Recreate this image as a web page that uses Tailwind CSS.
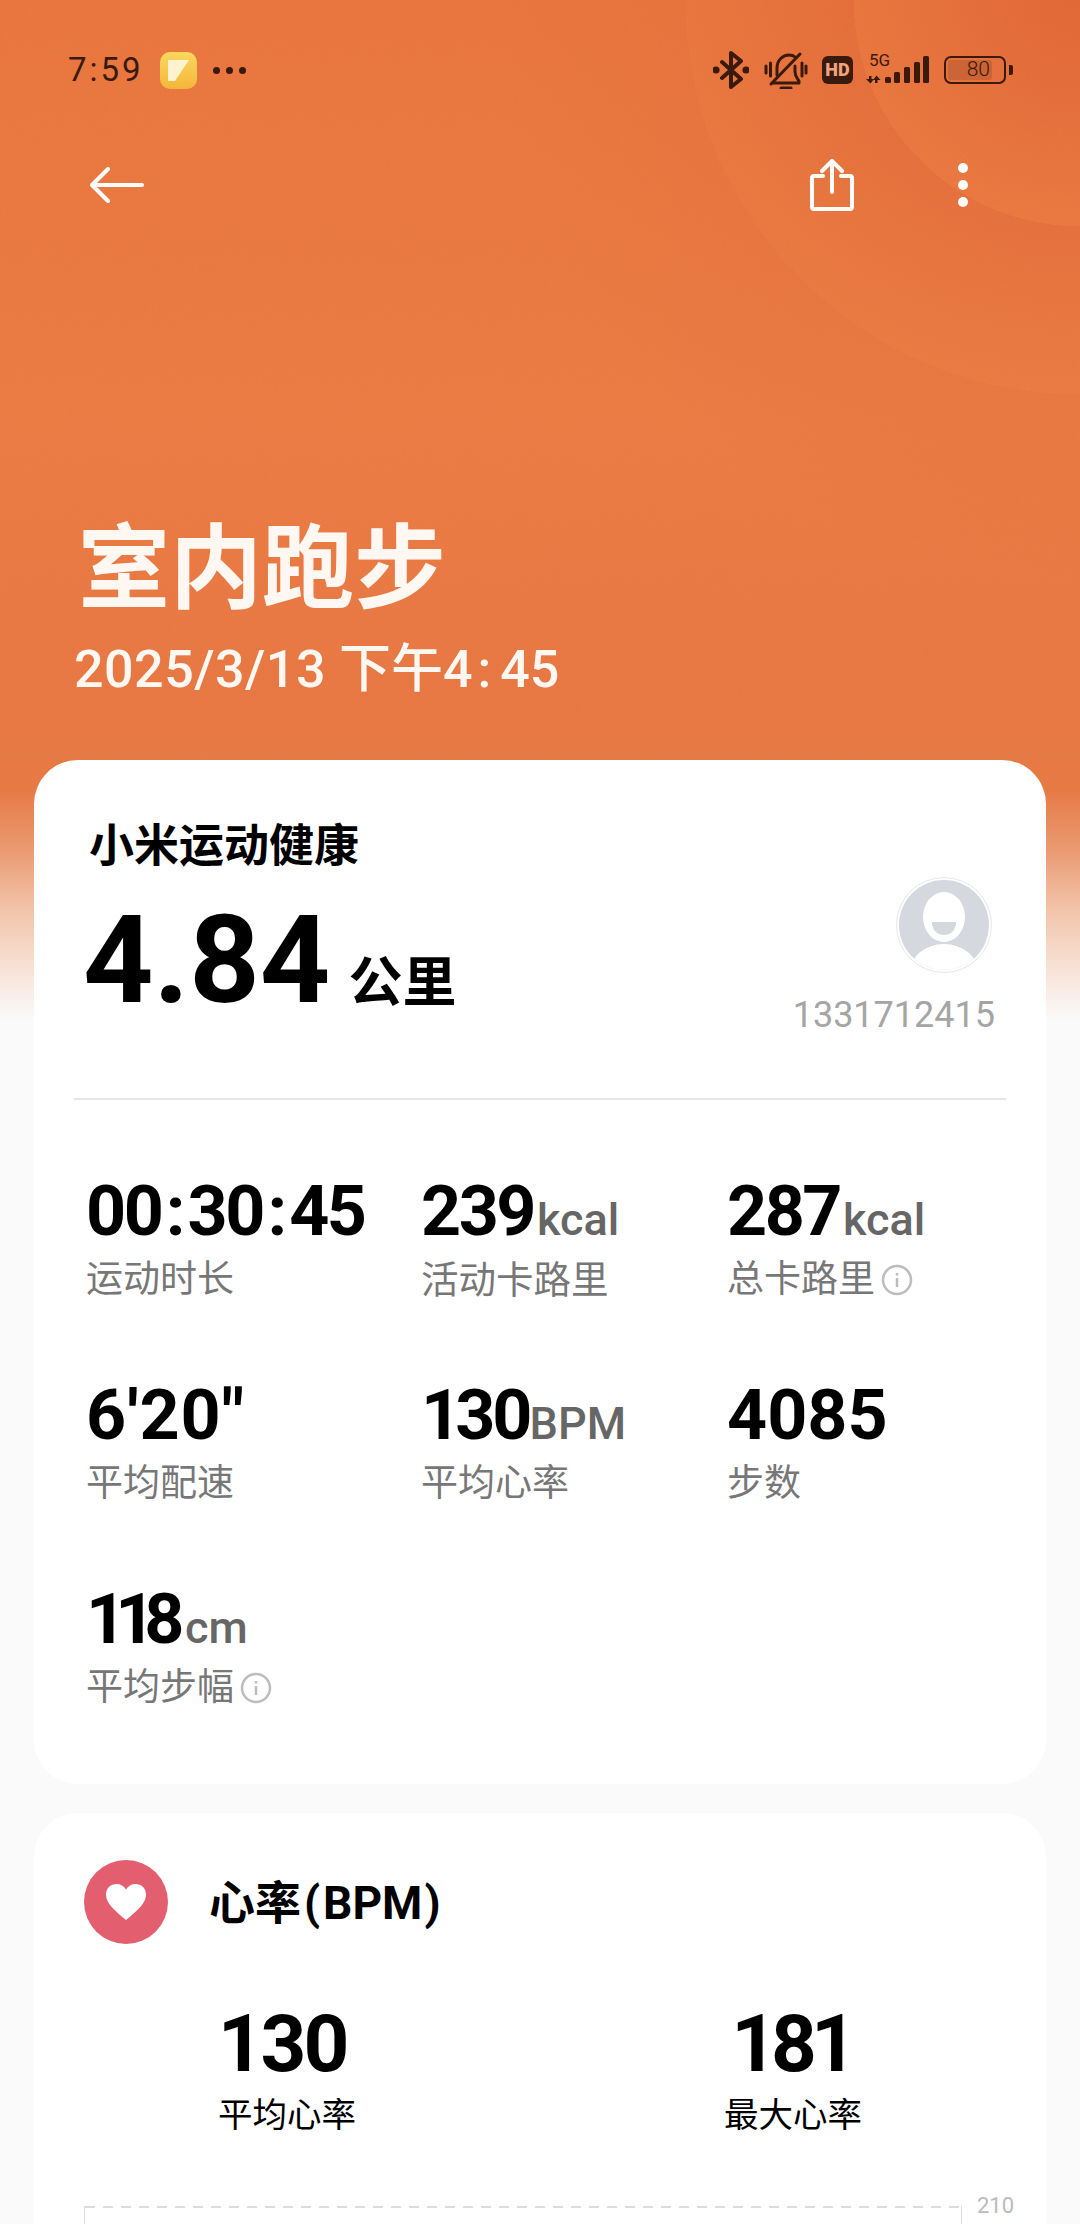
<!DOCTYPE html>
<html lang="zh-CN">
<head>
    <meta charset="UTF-8">
    <meta name="viewport" content="width=device-width, initial-scale=1.0">
    <title>室内跑步</title>
    <script src="https://cdn.jsdelivr.net/npm/@tailwindcss/browser@4"></script>
</head>
<body class="font-['Roboto','Noto_Sans_CJK_SC',sans-serif]">
<div class="relative w-[1080px] h-[2224px] overflow-hidden bg-[#fafafa]">

    <!-- orange header backdrop -->
    <div class="absolute top-0 left-0 w-full h-[1022px] bg-[linear-gradient(180deg,#ea743a_0px,#ec7a40_420px,#e97640_700px,#e67a45_790px,#ea9a72_850px,#f2c4aa_910px,#f8e5da_975px,#fafafa_1020px)]"></div>
    <svg class="absolute top-0 left-0" width="1080" height="760" viewBox="0 0 1080 760">
        <defs>
            <radialGradient id="rings" gradientUnits="userSpaceOnUse" cx="1080" cy="0" r="580">
                <stop offset="0" stop-color="#dc5c30" stop-opacity="0.6"/>
                <stop offset="0.39" stop-color="#dc5c30" stop-opacity="0"/>
                <stop offset="0.39" stop-color="#dc5c30" stop-opacity="0.3"/>
                <stop offset="0.68" stop-color="#dc5c30" stop-opacity="0"/>
                <stop offset="0.68" stop-color="#dc5c30" stop-opacity="0.12"/>
                <stop offset="1" stop-color="#dc5c30" stop-opacity="0"/>
            </radialGradient>
            <filter id="grain">
                <feTurbulence type="fractalNoise" baseFrequency="0.9" numOctaves="2"/>
                <feColorMatrix type="saturate" values="0"/>
            </filter>
        </defs>
        <circle cx="1080" cy="0" r="580" fill="url(#rings)"/>
        <rect width="1080" height="760" filter="url(#grain)" opacity="0.06"/>
    </svg>

    <div class="relative">
        <!-- status bar -->
        <div class="flex items-center justify-between h-[44px] mt-[48px] pl-[68px] pr-[67px] text-[#3a1a0d]">
            <div class="flex items-center">
                <span class="text-[33px] leading-[44px] tracking-[3px]">7:59</span>
                <div class="ml-[16px] w-[37px] h-[37px] rounded-[10px] bg-gradient-to-b from-[#fbd75e] to-[#f4b63a] flex items-center justify-center">
                    <svg width="23" height="23" viewBox="0 0 23 23"><path d="M1 1h21L8 22H1z" fill="#fdf3cf"/></svg>
                </div>
                <div class="ml-[16px] flex gap-[6px]">
                    <span class="w-[7px] h-[7px] rounded-full bg-[#3a1a0d]"></span>
                    <span class="w-[7px] h-[7px] rounded-full bg-[#3a1a0d]"></span>
                    <span class="w-[7px] h-[7px] rounded-full bg-[#3a1a0d]"></span>
                </div>
            </div>
            <div class="flex items-center">
                <!-- bluetooth -->
                <svg width="36" height="38" viewBox="0 0 36 38" fill="none" stroke="#3a1a0d" stroke-width="4" stroke-linecap="round" stroke-linejoin="round">
                    <path d="M9 11l19 17-10 8V2l10 8L9 27"/>
                    <circle cx="3" cy="19" r="1.6" fill="#3a1a0d"/>
                    <circle cx="33" cy="19" r="1.6" fill="#3a1a0d"/>
                </svg>
                <!-- muted bell -->
                <svg class="ml-[15px]" width="44" height="38" viewBox="0 0 44 38" fill="none" stroke="#3a1a0d" stroke-width="3" stroke-linecap="round" stroke-linejoin="round">
                    <path d="M13 24v-7C13 9 19 4 25 4c3 0 5 1 6 2"/>
                    <path d="M31 15v6c0 4 2 6 4 9v2H9"/>
                    <path d="M17 37h10"/>
                    <path d="M7 33L36 3"/>
                    <path d="M2 15v7M6.500 12v13M38 12v13M42 15v7"/>
                </svg>
                <!-- hd badge -->
                <div class="ml-[14px] w-[31px] h-[28px] rounded-[6px] bg-[#3a1a0d] text-[#f2a27c] text-[18px] leading-[28px] font-black text-center">HD</div>
                <!-- 5G + signal -->
                <div class="relative ml-[12px] w-[64px] h-[32px]">
                    <span class="absolute left-[4px] -top-[3px] text-[17px] leading-[18px]">5G</span>
                    <svg class="absolute left-0 top-0" width="64" height="32" viewBox="0 0 64 32" fill="#3a1a0d">
                        <path d="M4 22h2.500v3H9l-3.500 4.500L1 25h3z"/>
                        <path d="M10 29v-3H8l3.500-4.500L15.500 26h-3v3z"/>
                        <rect x="20" y="23" width="6" height="6" rx="1.500"/>
                        <rect x="29" y="18" width="6" height="11" rx="1.500"/>
                        <rect x="39" y="13" width="6" height="16" rx="1.500"/>
                        <rect x="49" y="8" width="6" height="21" rx="1.500"/>
                        <rect x="58" y="2" width="6" height="27" rx="1.500"/>
                    </svg>
                </div>
                <!-- battery -->
                <div class="ml-[15px] flex items-center">
                    <div class="w-[62px] h-[28px] rounded-[7px] border-[2.5px] border-[#3a1a0d] p-[2px]">
                        <div class="w-[44px] h-full rounded-[3px] bg-[#3a1a0d]/15 text-[21px] leading-[19px] font-light text-right pr-[2px]">80</div>
                    </div>
                    <span class="ml-[3px] w-[4px] h-[10px] rounded-r-[2px] bg-[#3a1a0d]"></span>
                </div>
            </div>
        </div>

        <!-- toolbar -->
        <div class="flex items-center justify-between h-[52px] mt-[67px] pl-[90px] pr-[112px]">
            <svg width="54" height="36" viewBox="0 0 54 36" fill="none" stroke="#fff" stroke-width="4" stroke-linecap="round" stroke-linejoin="round">
                <path d="M18 2L2 18l16 16M2 18h50"/>
            </svg>
            <div class="flex items-center gap-[104px]">
                <svg width="44" height="52" viewBox="0 0 44 52" fill="none" stroke="#fff" stroke-width="4" stroke-linecap="round" stroke-linejoin="round">
                    <path d="M13 17H4a2 2 0 0 0-2 2v29a2 2 0 0 0 2 2h36a2 2 0 0 0 2-2V19a2 2 0 0 0-2-2h-9"/>
                    <path d="M22 33V3M12 12l10-10 10 10"/>
                </svg>
                <div class="flex flex-col gap-[7px]">
                    <span class="w-[10px] h-[10px] rounded-full bg-white"></span>
                    <span class="w-[10px] h-[10px] rounded-full bg-white"></span>
                    <span class="w-[10px] h-[10px] rounded-full bg-white"></span>
                </div>
            </div>
        </div>

        <!-- title -->
        <h1 class="mt-[309px] pl-[78px] h-[100px] text-[92px] leading-[100px] font-bold text-[#fff8f2]">室内跑步</h1>
        <p class="mt-[20px] pl-[74px] h-[58px] text-[52px] leading-[60px] font-medium text-[#fff8f2]"><span class="tracking-[0.5px]">2025/3/13</span> 下午4<span class="ml-[5px] mr-[9px]">:</span>45</p>

        <!-- summary card -->
        <section class="mt-[62px] mx-[34px] h-[1024px] rounded-[44px] bg-white">
            <div class="flex justify-between h-[338px] pt-[57px] pl-[55px] pr-[51px]">
                <div>
                    <h2 class="h-[60px] text-[45px] leading-[60px] font-bold text-black">小米运动健康</h2>
                    <div class="mt-[23px] flex items-baseline">
                        <span class="-ml-[6px] text-[123px] leading-[120px] font-bold text-black">4.84</span>
                        <span class="ml-[18px] text-[54px] font-bold text-black">公里</span>
                    </div>
                </div>
                <div class="flex flex-col items-end pt-[60px]">
                    <div class="mr-[3px] w-[96px] h-[96px] rounded-full border border-[#e5e7eb] p-[2px]">
                        <svg width="90" height="90" viewBox="0 0 90 90">
                            <defs><clipPath id="avatarClip"><circle cx="45" cy="45" r="45"/></clipPath></defs>
                            <g clip-path="url(#avatarClip)">
                                <rect width="90" height="90" fill="#d5d8df"/>
                                <ellipse cx="45" cy="37" rx="21" ry="25" fill="#fff"/>
                                <path d="M33 42h24c0 9-6 13-12 13s-12-4-12-13z" fill="#d5d8df"/>
                                <ellipse cx="45" cy="92" rx="34" ry="28" fill="#fff"/>
                            </g>
                        </svg>
                    </div>
                    <span class="mt-[20px] text-[36px] leading-[44px] text-[#a5a5a5]">1331712415</span>
                </div>
            </div>
            <div class="mx-[40px] h-[2px] bg-[#e5e7eb]"></div>

            <!-- stats -->
            <div class="mt-[75px] pl-[52px] grid grid-cols-[335px_306px_1fr] gap-y-[77px]">
                <div>
                    <div class="h-[72px] text-[70px] leading-[72px] font-bold tracking-[-2.5px] text-black">00<span class="mx-[4.5px]">:</span>30<span class="mx-[4.5px]">:</span>45</div>
                    <div class="mt-[11px] h-[44px] text-[37px] leading-[44px] text-[#777]">运动时长</div>
                </div>
                <div>
                    <div class="h-[72px] text-[70px] leading-[72px] font-bold tracking-[-2.5px] text-black">239<span class="ml-[3px] text-[45px] font-medium tracking-normal text-[#666]">kcal</span></div>
                    <div class="mt-[11px] h-[44px] text-[37.500px] leading-[44px] text-[#777]">活动卡路里</div>
                </div>
                <div>
                    <div class="h-[72px] text-[70px] leading-[72px] font-bold tracking-[-2.5px] text-black">287<span class="ml-[3px] text-[45px] font-medium tracking-normal text-[#666]">kcal</span></div>
                    <div class="mt-[11px] h-[44px] flex items-center text-[37px] leading-[44px] text-[#777]">总卡路里
                        <svg class="ml-[6px]" width="32" height="32" viewBox="0 0 32 32" fill="none" stroke="#bdbdbd" stroke-width="2.500"><circle cx="16" cy="16" r="14"/><path d="M16 14v9M16 9v2.500"/></svg>
                    </div>
                </div>
                <div>
                    <div class="h-[72px] text-[70px] leading-[72px] font-bold tracking-[1px] text-black">6'20"</div>
                    <div class="mt-[11px] h-[44px] text-[37px] leading-[44px] text-[#777]">平均配速</div>
                </div>
                <div>
                    <div class="h-[72px] text-[70px] leading-[72px] font-bold tracking-[-3px] text-black"><span class="tracking-[-6px]">1</span>30<span class="text-[45px] font-medium tracking-normal text-[#666]">BPM</span></div>
                    <div class="mt-[11px] h-[44px] text-[37px] leading-[44px] text-[#777]">平均心率</div>
                </div>
                <div>
                    <div class="h-[72px] text-[70px] leading-[72px] font-bold text-black">4085</div>
                    <div class="mt-[11px] h-[44px] text-[37px] leading-[44px] text-[#777]">步数</div>
                </div>
                <div>
                    <div class="h-[72px] text-[70px] leading-[72px] font-bold tracking-[-2.5px] text-black"><span class="tracking-[-11px]">11</span>8<span class="ml-[3px] text-[45px] font-medium tracking-normal text-[#666]">cm</span></div>
                    <div class="mt-[11px] h-[44px] flex items-center text-[37px] leading-[44px] text-[#777]">平均步幅
                        <svg class="ml-[6px]" width="32" height="32" viewBox="0 0 32 32" fill="none" stroke="#bdbdbd" stroke-width="2.500"><circle cx="16" cy="16" r="14"/><path d="M16 14v9M16 9v2.500"/></svg>
                    </div>
                </div>
            </div>
        </section>

        <!-- heart rate card -->
        <section class="mt-[29px] mx-[34px] h-[460px] rounded-t-[44px] bg-white">
            <div class="flex items-center pt-[47px] pl-[50px]">
                <div class="w-[84px] h-[84px] rounded-full bg-[#e35f70] flex items-center justify-center">
                    <svg width="42" height="38" viewBox="0 0 42 38"><path d="M21 37C9 27 1 20 1 11.500C1 5 6 1 11.500 1 15.500 1 19 3 21 6.500 23 3 26.500 1 30.500 1 36 1 41 5 41 11.500 41 20 33 27 21 37z" fill="#fff"/></svg>
                </div>
                <h2 class="ml-[41px] pt-[3px] text-[46px] font-bold text-black">心率<span class="mx-[3px]">(</span>BPM<span class="ml-[2px]">)</span></h2>
            </div>
            <div class="mt-[60px] grid grid-cols-2">
                <div class="text-center">
                    <div class="h-[80px] pr-[10px] text-[80px] leading-[80px] font-bold tracking-[-3px] text-black">130</div>
                    <div class="mt-[11px] h-[40px] text-[34.500px] leading-[40px] text-black">平均心率</div>
                </div>
                <div class="text-center">
                    <div class="h-[80px] pr-[4px] text-[80px] leading-[80px] font-bold tracking-[-6px] text-black">181</div>
                    <div class="mt-[11px] h-[40px] text-[34.500px] leading-[40px] text-black">最大心率</div>
                </div>
            </div>
            <div class="mt-[71px] ml-[50px] flex items-start">
                <div class="w-[878px] h-[80px] border-x border-[#ddd]">
                    <div class="h-[2px] bg-[repeating-linear-gradient(90deg,#ddd_0px,#ddd_10px,transparent_10px,transparent_18px)]"></div>
                </div>
                <span class="ml-[15px] -mt-[12px] text-[22px] leading-[24px] text-[#bbb]">210</span>
            </div>
        </section>
    </div>
</div>
</body>
</html>
